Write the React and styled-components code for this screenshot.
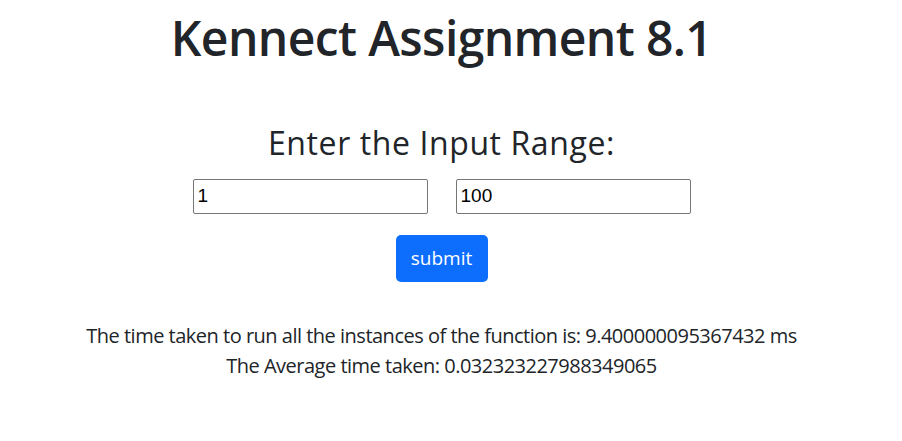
import React, { useState } from "react";
import styled, { createGlobalStyle } from "styled-components";

const GlobalStyle = createGlobalStyle`
  body {
    margin: 0;
    background: #fff;
    color: #212529;
    font-family: "Open Sans", "Noto Sans", sans-serif;
  }
`;

// centre sits at 442px, the browser scrollbar took its width in the original
const Page = styled.main`
  display: flex;
  flex-direction: column;
  align-items: center;
  padding-right: 19px;
  text-align: center;
`;

const Title = styled.h1`
  margin: 9px 0 0;
  font-size: 48px;
  font-weight: 600;
  line-height: 1.2;
  letter-spacing: -0.6px;
`;

const RangeForm = styled.form`
  display: flex;
  flex-direction: column;
  align-items: center;
  margin-top: 57px;
`;

const Label = styled.h2`
  margin: 0;
  font-size: 32px;
  font-weight: 400;
  line-height: 1.2;
  letter-spacing: 0.6px;
`;

const InputRow = styled.div`
  display: flex;
  gap: 28px;
  margin-top: 17px;
`;

const RangeInput = styled.input`
  box-sizing: border-box;
  width: 235px;
  height: 35px;
  padding: 2px 4px;
  border: 1px solid #767676;
  border-radius: 2px;
  font-family: "Liberation Sans", Arial, sans-serif;
  font-size: 19px;
  color: #000;
`;

const SubmitButton = styled.button`
  margin-top: 21px;
  width: 92px;
  height: 47px;
  border: none;
  border-radius: 5px;
  background: #0d6efd;
  color: #fff;
  font-family: "Open Sans", "Noto Sans", sans-serif;
  font-size: 19px;
  cursor: pointer;
`;

const Results = styled.div`
  margin-top: 39px;
  font-size: 20px;
  line-height: 30px;
  letter-spacing: -0.5px;
`;

const Line = styled.p`
  margin: 0;
`;

export default function App() {
  const [from, setFrom] = useState("1");
  const [to, setTo] = useState("100");

  return (
    <Page>
      <GlobalStyle />
      <Title>Kennect Assignment 8.1</Title>
      <RangeForm onSubmit={(e) => e.preventDefault()}>
        <Label>Enter the Input Range:</Label>
        <InputRow>
          <RangeInput value={from} onChange={(e) => setFrom(e.target.value)} />
          <RangeInput value={to} onChange={(e) => setTo(e.target.value)} />
        </InputRow>
        <SubmitButton type="submit">submit</SubmitButton>
      </RangeForm>
      <Results>
        <Line>
          The time taken to run all the instances of the function is:
          9.400000095367432 ms
        </Line>
        <Line>The Average time taken: 0.032323227988349065</Line>
      </Results>
    </Page>
  );
}
